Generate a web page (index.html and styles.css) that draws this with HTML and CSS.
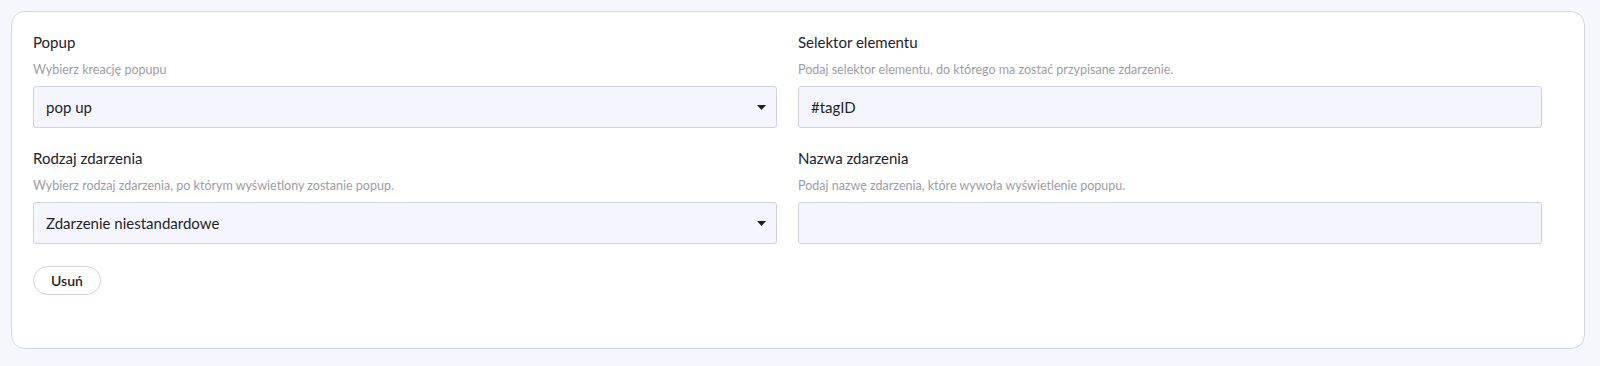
FILE: index.html
```html
<!DOCTYPE html>
<html lang="pl">
<head>
    <meta charset="UTF-8">
    <meta name="viewport" content="width=device-width, initial-scale=1.0">
    <title>Wyzwalacz popupu</title>
    <link rel="stylesheet" href="styles.css">
</head>
<body>
    <div class="card">
      <div class="fields">
        <div class="field">
          <label class="label">Popup</label>
          <p class="hint">Wybierz kreację popupu</p>
          <div class="control select">
            <span>pop up</span>
            <svg class="caret" width="9" height="5" viewBox="0 0 9 5"><path d="M0 0h9L4.5 5z" fill="#1d1d2b"/></svg>
          </div>
        </div>
        <div class="field">
          <label class="label">Selektor elementu</label>
          <p class="hint">Podaj selektor elementu, do którego ma zostać przypisane zdarzenie.</p>
          <input class="control" type="text" value="#tagID">
        </div>
        <div class="field">
          <label class="label">Rodzaj zdarzenia</label>
          <p class="hint">Wybierz rodzaj zdarzenia, po którym wyświetlony zostanie popup.</p>
          <div class="control select">
            <span>Zdarzenie niestandardowe</span>
            <svg class="caret" width="9" height="5" viewBox="0 0 9 5"><path d="M0 0h9L4.5 5z" fill="#1d1d2b"/></svg>
          </div>
        </div>
        <div class="field">
          <label class="label">Nazwa zdarzenia</label>
          <p class="hint">Podaj nazwę zdarzenia, które wywoła wyświetlenie popupu.</p>
          <input class="control" type="text" value="">
        </div>
      </div>
      <button class="remove">Usuń</button>
    </div>
</body>
</html>
```

FILE: styles.css
```css
* {
    margin: 0;
    padding: 0;
    box-sizing: border-box;
}
body {
    background: #f6f7fd;
    padding: 11px 15px 17px 11px;
    font-family: 'Lato', 'Noto Sans', sans-serif;
    color: #1f1f26;
}
.card {
    background: #fff;
    border: 1px solid #d3d5e0;
    border-radius: 14px;
    padding: 20px 21px 53px;
}
.fields {
    display: grid;
    grid-template-columns: 1fr 1fr;
    row-gap: 20px;
}
.field {
    display: flex;
    flex-direction: column;
    padding-right: 21px;
}
.label {
    font-size: 15px;
    line-height: 20px;
    color: #22222a;
}
.hint {
    font-size: 12.5px;
    line-height: 16px;
    color: #9d9da4;
    margin-top: 10px;
    margin-bottom: 8px;
}
.control {
    height: 42px;
    border: 1px solid #cfd1de;
    border-radius: 3px;
    background: #f5f6fd;
    padding: 0 12px;
    font-family: inherit;
    font-size: 15px;
    color: #1f1f26;
    outline: none;
}
.select {
    display: flex;
    align-items: center;
    justify-content: space-between;
    padding-right: 10px;
}
.caret {
    display: block;
}
.remove {
    margin-top: 22px;
    height: 29px;
    width: 68px;
    border: 1px solid #cfd1de;
    border-radius: 15px;
    background: #fff;
    font-family: inherit;
    font-size: 14px;
    font-weight: 600;
    color: #1f1f26;
    cursor: pointer;
}
```
